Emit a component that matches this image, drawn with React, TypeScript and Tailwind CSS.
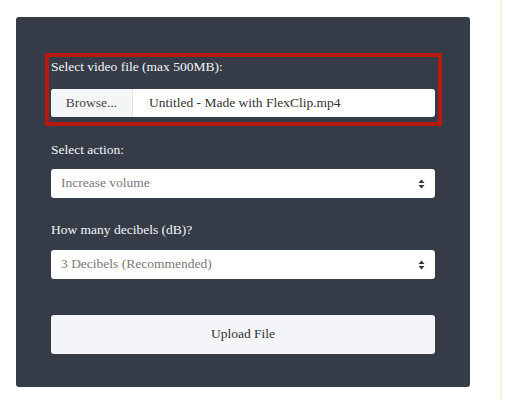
const serif = { fontFamily: '"Liberation Serif", "DejaVu Serif", serif' };

const Arrows = () => (
  <svg width="7" height="10" viewBox="0 0 7 10" className="fill-[#333]">
    <path d="M3.5 0.5 L6.5 4 H0.5 Z" />
    <path d="M3.5 9.5 L6.5 6 H0.5 Z" />
  </svg>
);

const FakeSelect = ({ value }: { value: string }) => (
  <div className="h-[29px] bg-white rounded-[3px] flex items-center justify-between pl-[10px] pr-[10px]">
    <span className="text-[13.5px] text-[#7a7a7a]">{value}</span>
    <Arrows />
  </div>
);

export default function App() {
  return (
    <div className="min-h-screen bg-white flex" style={serif}>
      <div className="ml-4 mt-[17px] w-[454px] h-[370px] bg-[#353c48] rounded-[3px] px-[35px] pt-[36px] flex flex-col">
        {/* highlighted file field */}
        <div className="-ml-[6px] -mr-[7px] border-4 border-solid border-[#b5190f] pl-[2px] pr-[3px] pb-[5px]">
          <div className="h-[20px] leading-[20px] text-[13.5px] text-[#f3f4f6] mb-[12px]">
            Select video file (max 500MB):
          </div>
          <div className="h-[28px] bg-white rounded-[3px] flex items-stretch overflow-hidden">
            <div className="w-[82px] bg-[#f4f5f7] border-r border-[#e3e5e8] flex items-center justify-center text-[13.5px] text-[#444]">
              Browse...
            </div>
            <div className="pl-[16px] flex items-center text-[13.5px] text-[#333]">
              Untitled - Made with FlexClip.mp4
            </div>
          </div>
        </div>

        <div className="mt-[14px] h-[20px] leading-[20px] text-[13.5px] text-[#f3f4f6] mb-[9px]">Select action:</div>
        <FakeSelect value="Increase volume" />

        <div className="mt-[22px] h-[20px] leading-[20px] text-[13.5px] text-[#f3f4f6] mb-[10px]">How many decibels (dB)?</div>
        <FakeSelect value="3 Decibels (Recommended)" />

        <button className="mt-[36px] h-[39px] bg-[#f3f5f8] rounded-[3px] text-[13.5px] text-[#333]">
          Upload File
        </button>
      </div>
      <div className="ml-[30px] w-[2px] bg-[#fcf0d4]" />
    </div>
  );
}
